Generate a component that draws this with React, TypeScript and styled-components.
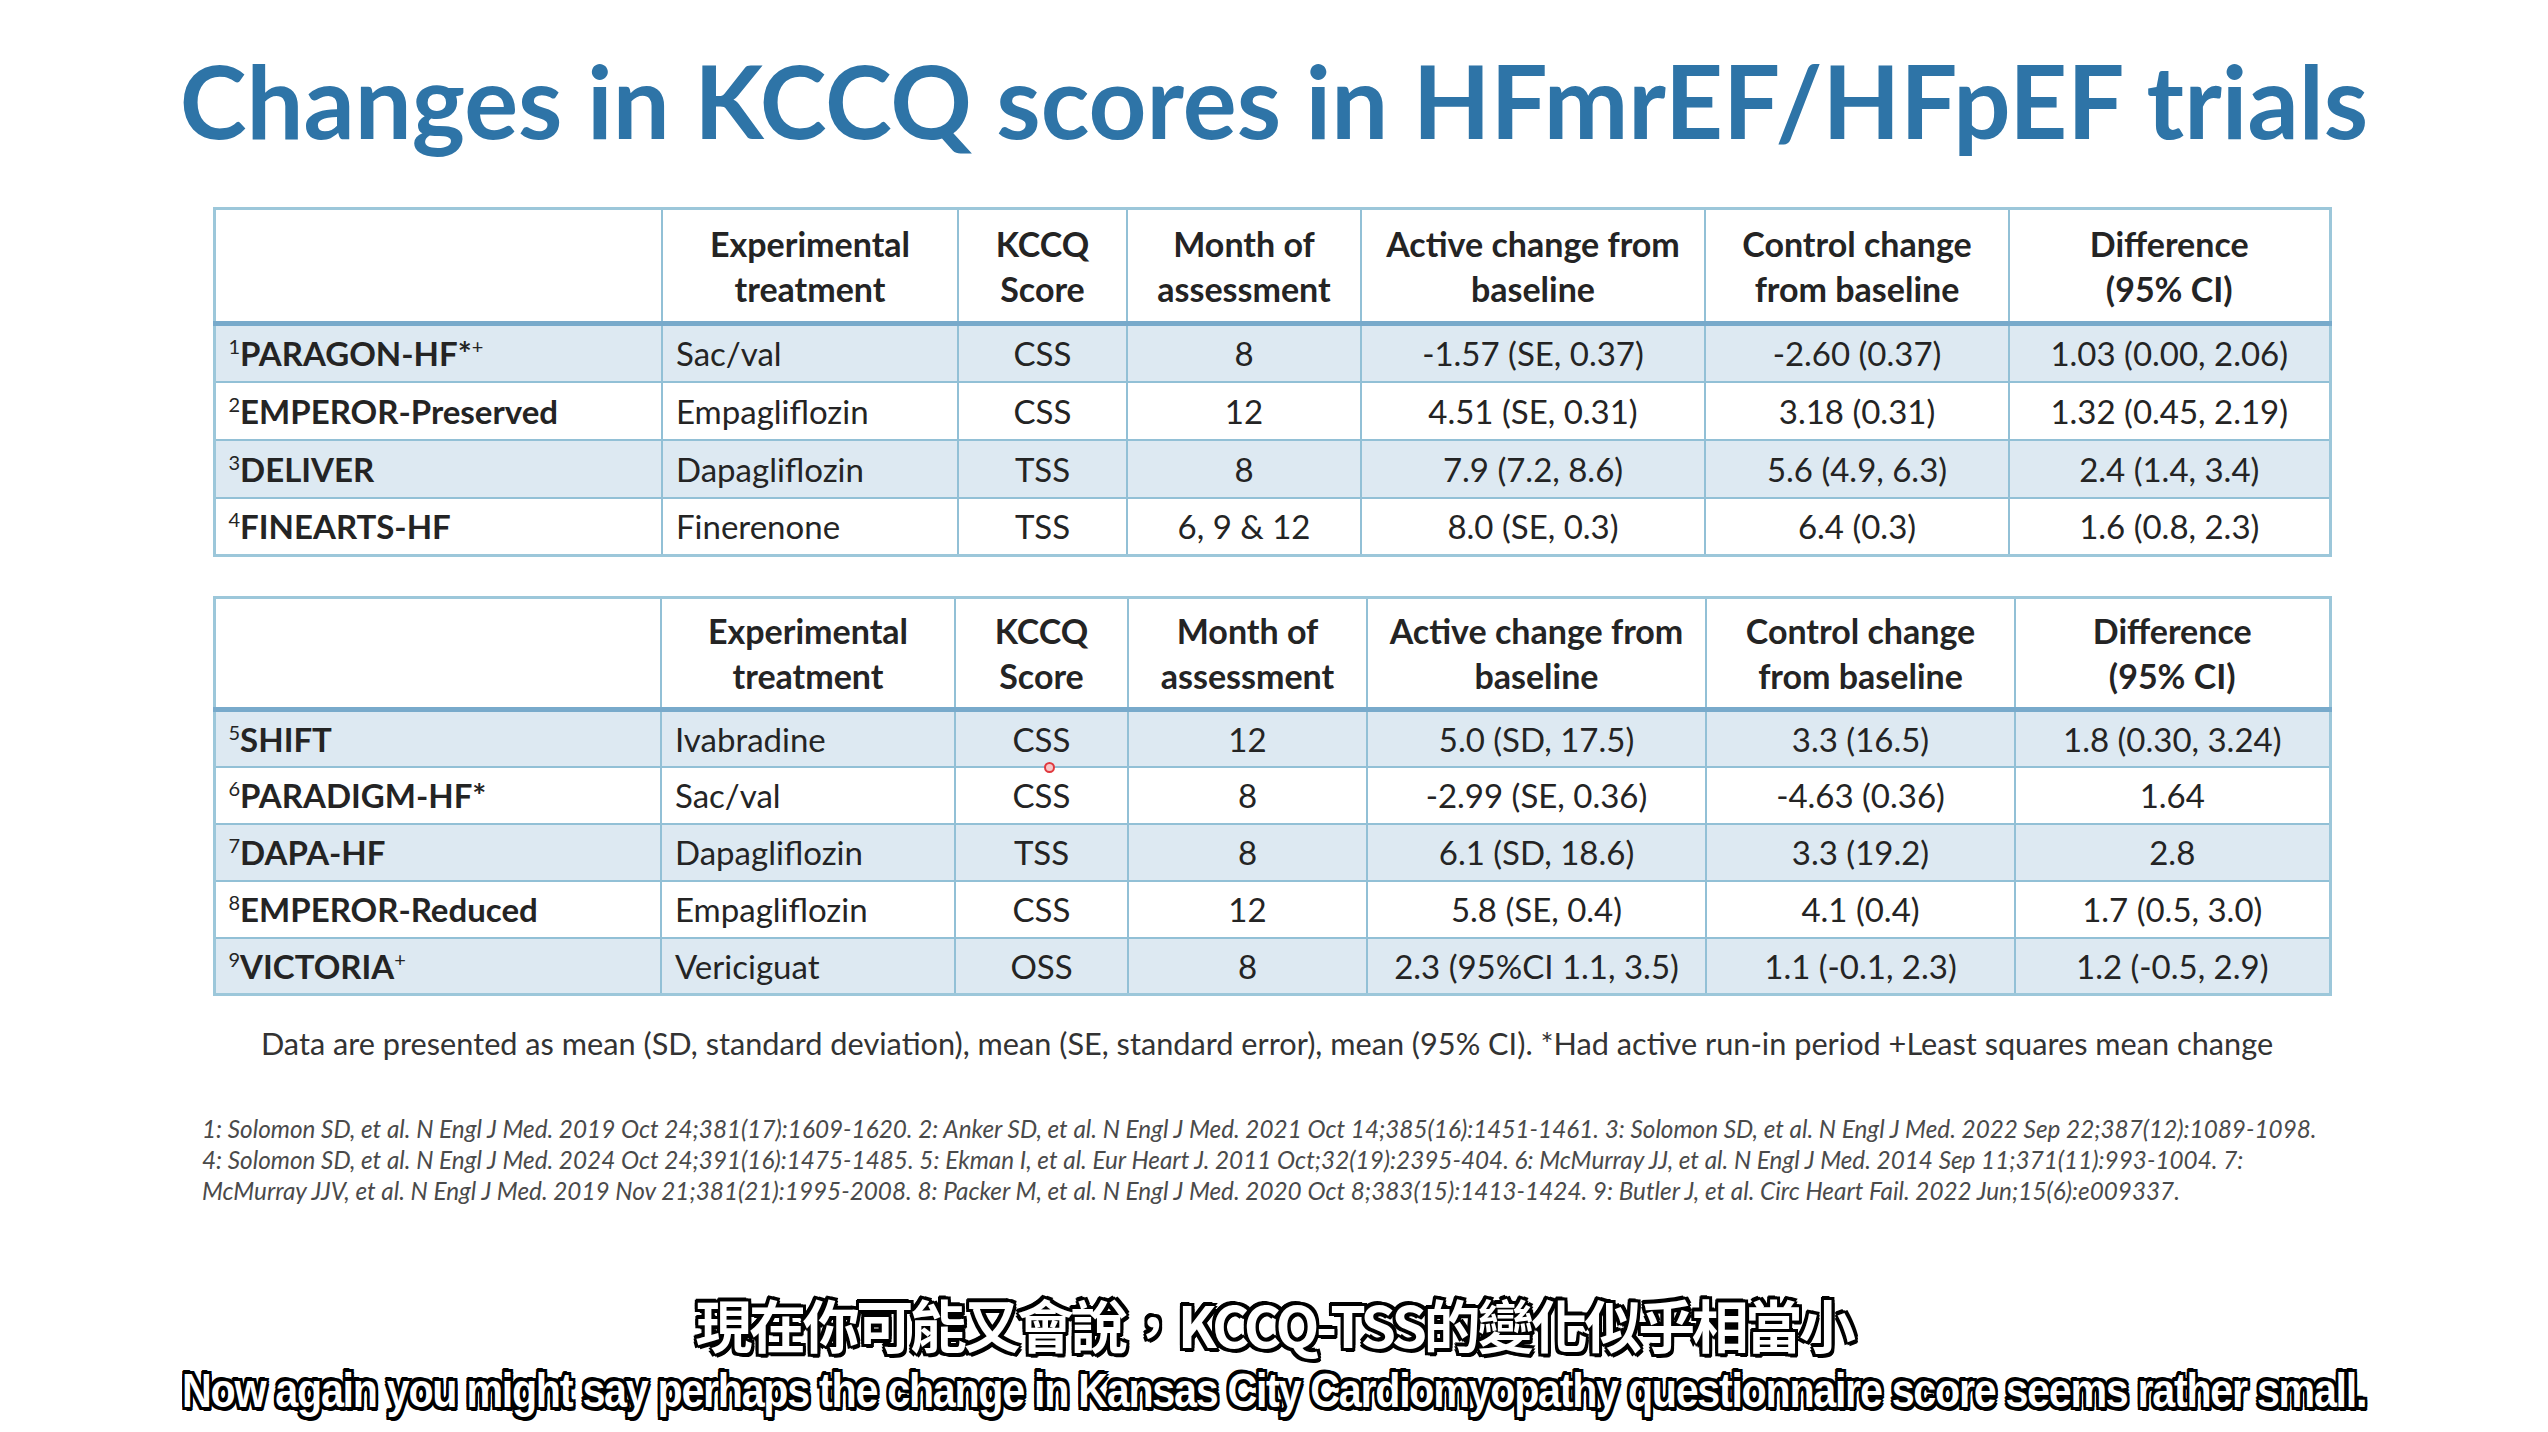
import React, { useLayoutEffect, useRef, useState } from "react";
import styled, { createGlobalStyle } from "styled-components";

type Row = {
  num: string;
  name: string;
  mark?: string;
  treatment: string;
  score: string;
  month: string;
  active: string;
  control: string;
  diff: string;
};

const GlobalStyle = createGlobalStyle`
  html, body {
    margin: 0;
    padding: 0;
    background: #ffffff;
  }
  body {
    font-family: Lato, "Open Sans", sans-serif;
    color: #222222;
  }
`;

const Slide = styled.div`
  position: relative;
  width: 2548px;
  height: 1432px;
  overflow: hidden;
  background: #ffffff;
  display: flex;
  flex-direction: column;
  align-items: center;
  padding-top: 38px;
  box-sizing: border-box;
`;

const Title = styled.h1`
  margin: 0;
  font-family: Lato, sans-serif;
  font-weight: 700;
  font-size: 101px;
  line-height: 124px;
  color: #2e74a7;
  white-space: nowrap;
`;

const Table = styled.table<{ $top: number }>`
  margin-top: ${(p) => p.$top}px;
  margin-left: -4px;
  width: 2116px;
  table-layout: fixed;
  border-collapse: collapse;
  border: 3px solid #9cc7da;
  font-size: 33px;
  color: #242424;
`;

const HeadRow = styled.tr<{ $height: number }>`
  height: ${(p) => p.$height}px;
  background: #ffffff;
  border-bottom: 5px solid #78aacb;
`;

const HeadCell = styled.th`
  font-weight: 700;
  font-size: 34px;
  line-height: 45px;
  text-align: center;
  vertical-align: middle;
  padding: 0 6px;
  border-left: 2px solid #92c0d6;
`;

const BodyRow = styled.tr<{ $height: number; $shaded: boolean }>`
  height: ${(p) => p.$height}px;
  background: ${(p) => (p.$shaded ? "#dde9f2" : "#ffffff")};
  border-top: 2px solid #92c0d6;
`;

const Cell = styled.td<{ $align?: "left" | "center" }>`
  text-align: ${(p) => p.$align || "center"};
  vertical-align: middle;
  padding: 0 ${(p) => (p.$align === "left" ? "13px" : "4px")};
  border-left: 2px solid #92c0d6;
  white-space: nowrap;
  line-height: 40px;
`;

const TrialName = styled.span`
  font-weight: 700;
`;

const Sup = styled.sup`
  font-size: 20px;
  line-height: 0;
  vertical-align: 12px;
  font-weight: 400;
`;

const Note = styled.p`
  margin: 30px 14px 0 0;
  font-size: 30.7px;
  line-height: 36px;
  color: #333333;
  white-space: nowrap;
`;

const References = styled.p`
  align-self: flex-start;
  margin: 52px 0 0 202px;
  font-size: 24.3px;
  line-height: 30.8px;
  font-style: italic;
  color: #4a4a4a;
  white-space: nowrap;
`;

const Subtitles = styled.div`
  position: absolute;
  left: 0;
  right: 0;
  bottom: 14px;
  display: flex;
  flex-direction: column;
  align-items: center;
  color: #ffffff;
  text-shadow: -3px -3px 0 #000, 3px -3px 0 #000, -3px 3px 0 #000,
    3px 3px 0 #000, 0 -3px 0 #000, 0 3px 0 #000, -3px 0 0 #000, 3px 0 0 #000,
    -2px -4px 0 #000, 2px 4px 0 #000;
`;

const SubZh = styled.div`
  margin-bottom: 8px;
  font-family: "Noto Sans CJK TC", "Noto Sans CJK SC", sans-serif;
  font-weight: 700;
  font-size: 57px;
  line-height: 66px;
  letter-spacing: -3.4px;
  white-space: nowrap;
`;

const SubEn = styled.div`
  display: inline-block;
  font-family: "Liberation Sans", sans-serif;
  font-weight: 700;
  font-size: 48px;
  line-height: 54px;
  letter-spacing: -1.5px;
  white-space: nowrap;
  transform-origin: center center;
`;

const Cursor = styled.div`
  position: absolute;
  left: 1044px;
  top: 762px;
  width: 7px;
  height: 7px;
  border-radius: 50%;
  border: 2.5px solid #e0383e;
  background: #f7c6c8;
`;

const headers: React.ReactNode[] = [
  "",
  <>Experimental<br />treatment</>,
  <>KCCQ<br />Score</>,
  <>Month of<br />assessment</>,
  <>Active change from<br />baseline</>,
  <>Control change<br />from baseline</>,
  <>Difference<br />(95% CI)</>,
];

const preservedRows: Row[] = [
  { num: "1", name: "PARAGON-HF*", mark: "+", treatment: "Sac/val", score: "CSS", month: "8", active: "-1.57 (SE, 0.37)", control: "-2.60 (0.37)", diff: "1.03 (0.00, 2.06)" },
  { num: "2", name: "EMPEROR-Preserved", treatment: "Empagliflozin", score: "CSS", month: "12", active: "4.51 (SE, 0.31)", control: "3.18 (0.31)", diff: "1.32 (0.45, 2.19)" },
  { num: "3", name: "DELIVER", treatment: "Dapagliflozin", score: "TSS", month: "8", active: "7.9 (7.2, 8.6)", control: "5.6 (4.9, 6.3)", diff: "2.4 (1.4, 3.4)" },
  { num: "4", name: "FINEARTS-HF", treatment: "Finerenone", score: "TSS", month: "6, 9 & 12", active: "8.0 (SE, 0.3)", control: "6.4 (0.3)", diff: "1.6 (0.8, 2.3)" },
];

const reducedRows: Row[] = [
  { num: "5", name: "SHIFT", treatment: "Ivabradine", score: "CSS", month: "12", active: "5.0 (SD, 17.5)", control: "3.3 (16.5)", diff: "1.8 (0.30, 3.24)" },
  { num: "6", name: "PARADIGM-HF*", treatment: "Sac/val", score: "CSS", month: "8", active: "-2.99 (SE, 0.36)", control: "-4.63 (0.36)", diff: "1.64" },
  { num: "7", name: "DAPA-HF", treatment: "Dapagliflozin", score: "TSS", month: "8", active: "6.1 (SD, 18.6)", control: "3.3 (19.2)", diff: "2.8" },
  { num: "8", name: "EMPEROR-Reduced", treatment: "Empagliflozin", score: "CSS", month: "12", active: "5.8 (SE, 0.4)", control: "4.1 (0.4)", diff: "1.7 (0.5, 3.0)" },
  { num: "9", name: "VICTORIA", mark: "+", treatment: "Vericiguat", score: "OSS", month: "8", active: "2.3 (95%CI 1.1, 3.5)", control: "1.1 (-0.1, 2.3)", diff: "1.2 (-0.5, 2.9)" },
];

type TrialTableProps = {
  columns: number[];
  headHeight: number;
  rowHeight: number;
  rows: Row[];
  top: number;
};

const TrialTable = ({ columns, headHeight, rowHeight, rows, top }: TrialTableProps) => {
  return (
    <Table $top={top}>
      <colgroup>
        {columns.map((width, index) => (
          <col key={`col-${index}`} style={{ width: `${width}px` }} />
        ))}
      </colgroup>
      <thead>
        <HeadRow $height={headHeight}>
          {headers.map((header, index) => (
            <HeadCell key={`head-${index}`}>{header}</HeadCell>
          ))}
        </HeadRow>
      </thead>
      <tbody>
        {rows.map((row, index) => (
          <BodyRow key={`row-${row.num}`} $height={rowHeight} $shaded={index % 2 === 0}>
            <Cell $align="left">
              <TrialName>
                <Sup>{row.num}</Sup>
                {row.name}
                {row.mark ? <Sup>{row.mark}</Sup> : null}
              </TrialName>
            </Cell>
            <Cell $align="left">{row.treatment}</Cell>
            <Cell>{row.score}</Cell>
            <Cell>{row.month}</Cell>
            <Cell>{row.active}</Cell>
            <Cell>{row.control}</Cell>
            <Cell>{row.diff}</Cell>
          </BodyRow>
        ))}
      </tbody>
    </Table>
  );
};

// the caption font is narrower than anything installed, so squeeze it to the measured width
const EN_CAPTION_WIDTH = 2184;

const EnglishCaption = ({ text }: { text: string }) => {
  const ref = useRef<HTMLDivElement>(null);
  const [scale, setScale] = useState(0.78);

  useLayoutEffect(() => {
    const measure = () => {
      const width = ref.current?.offsetWidth;
      if (width) setScale(EN_CAPTION_WIDTH / width);
    };
    measure();
    document.fonts?.ready.then(measure);
  }, []);

  return (
    <SubEn ref={ref} style={{ transform: `scaleX(${scale})` }}>
      {text}
    </SubEn>
  );
};

export default function App() {
  return (
    <>
      <GlobalStyle />
      <Slide>
        <Title>Changes in KCCQ scores in HFmrEF/HFpEF trials</Title>
        <TrialTable
          columns={[448, 296, 169, 234, 344, 304, 321]}
          headHeight={115}
          rowHeight={58}
          rows={preservedRows}
          top={45}
        />
        <TrialTable
          columns={[447, 294, 173, 239, 339, 309, 315]}
          headHeight={112}
          rowHeight={57}
          rows={reducedRows}
          top={39}
        />
        <Note>
          Data are presented as mean (SD, standard deviation), mean (SE, standard error), mean (95% CI). *Had active
          run-in period +Least squares mean change
        </Note>
        <References>
          1: Solomon SD, et al. N Engl J Med. 2019 Oct 24;381(17):1609-1620. 2: Anker SD, et al. N Engl J Med. 2021 Oct
          14;385(16):1451-1461. 3: Solomon SD, et al. N Engl J Med. 2022 Sep 22;387(12):1089-1098.
          <br />
          4: Solomon SD, et al. N Engl J Med. 2024 Oct 24;391(16):1475-1485. 5: Ekman I, et al. Eur Heart J. 2011
          Oct;32(19):2395-404. 6: McMurray JJ, et al. N Engl J Med. 2014 Sep 11;371(11):993-1004. 7:
          <br />
          McMurray JJV, et al. N Engl J Med. 2019 Nov 21;381(21):1995-2008. 8: Packer M, et al. N Engl J Med. 2020 Oct
          8;383(15):1413-1424. 9: Butler J, et al. Circ Heart Fail. 2022 Jun;15(6):e009337.
        </References>
        <Cursor />
        <Subtitles>
          <SubZh>現在你可能又會說，KCCQ-TSS的變化似乎相當小</SubZh>
          <EnglishCaption text="Now again you might say perhaps the change in Kansas City Cardiomyopathy questionnaire score seems rather small." />
        </Subtitles>
      </Slide>
    </>
  );
}
